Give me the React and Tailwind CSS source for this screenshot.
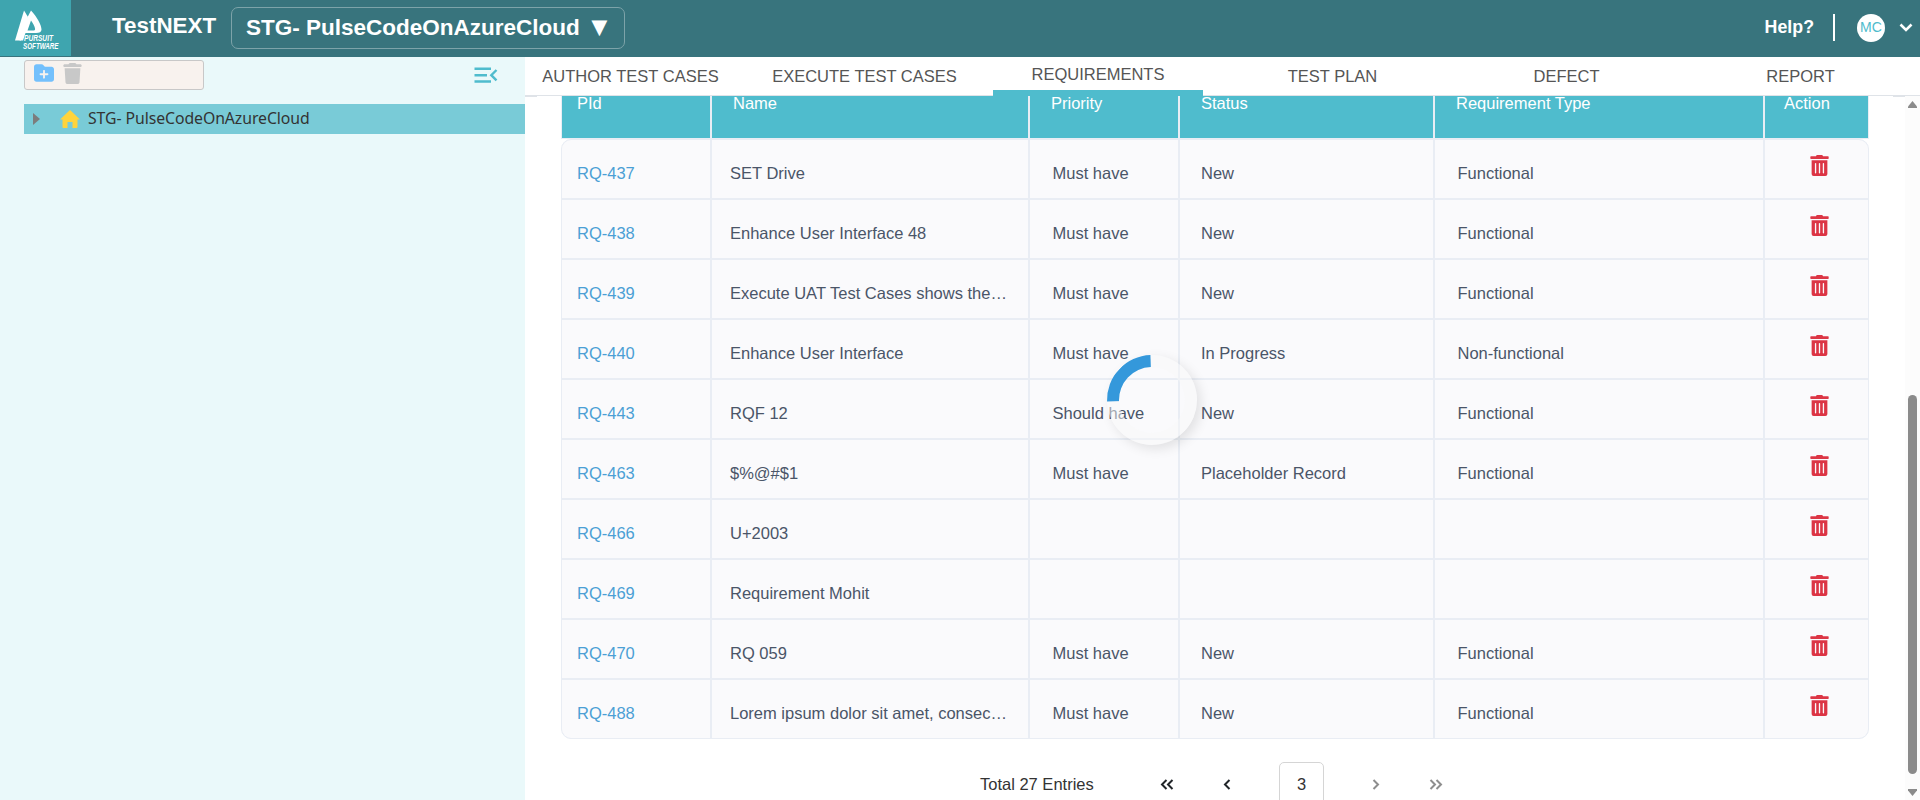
import React from "react";
import { FaTrashAlt } from "react-icons/fa";
import { FaTrash, FaFolderPlus } from "react-icons/fa6";

const rows = [
  ["RQ-437", "SET Drive", "Must have", "New", "Functional"],
  ["RQ-438", "Enhance User Interface 48", "Must have", "New", "Functional"],
  ["RQ-439", "Execute UAT Test Cases shows the…", "Must have", "New", "Functional"],
  ["RQ-440", "Enhance User Interface", "Must have", "In Progress", "Non-functional"],
  ["RQ-443", "RQF 12", "Should have", "New", "Functional"],
  ["RQ-463", "$%@#$1", "Must have", "Placeholder Record", "Functional"],
  ["RQ-466", "U+2003", "", "", ""],
  ["RQ-469", "Requirement Mohit", "", "", ""],
  ["RQ-470", "RQ 059", "Must have", "New", "Functional"],
  ["RQ-488", "Lorem ipsum dolor sit amet, consec…", "Must have", "New", "Functional"],
];

const tabs = ["AUTHOR TEST CASES", "EXECUTE TEST CASES", "REQUIREMENTS", "TEST PLAN", "DEFECT", "REPORT"];

const grid = "grid grid-cols-[148px_316px_148px_253px_328px_103px] gap-x-[2px]";

function Logo() {
  return (
    <svg viewBox="0 0 71 56" className="h-[56px] w-[71px]">
      <path d="M24 10.500 28 17 21 40.500H15z" fill="#fff" />
      <path
        d="M31 10.500C37 17 41.500 25 41.500 29.500C41.500 32 39.500 33 36 33H25.500L23 40.500H19.500L26.500 19z M31 20.500L27.500 30.500H34C36 30.500 35.500 27 31 20.500z"
        fill="#fff"
        fillRule="evenodd"
      />
      <g fill="#fff" fontFamily="Liberation Sans Narrow, Liberation Sans, sans-serif" fontWeight="700" fontStyle="italic" fontSize="8.500">
        <text x="24" y="41.300" textLength="29" lengthAdjust="spacingAndGlyphs">PURSUIT</text>
        <text x="23" y="49" textLength="35.500" lengthAdjust="spacingAndGlyphs">SOFTWARE</text>
      </g>
    </svg>
  );
}

function Header() {
  return (
    <header className="flex h-[57px] shrink-0 items-start bg-[#38747d] text-white">
      <div className="h-[56px] w-[71px] bg-[#3ea5af]"><Logo /></div>
      <div className="mt-[13px] ml-[41px] w-[119px] text-[22.4px] leading-[26px] font-bold">TestNEXT</div>
      <button className="mt-[7px] flex h-[42px] w-[394px] items-center rounded-[7px] border border-[#7da3a9] pl-[14px] text-left text-[22.5px] leading-[26px] font-bold whitespace-pre">
        STG- PulseCodeOnAzureCloud <span className="-mt-[2px] text-[27px]">▼</span>
      </button>
      <div className="ml-auto flex h-[55px] items-center">
        <span className="text-[17.8px] font-bold">Help?</span>
        <span className="ml-[19px] h-[27px] w-[2px] bg-white" />
        <span className="ml-[22px] flex size-[28px] items-center justify-center rounded-full bg-white text-[14px] text-[#4fbccd]">MC</span>
        <svg viewBox="0 0 14 9" className="mr-[7px] ml-[14px] h-[9px] w-[14px]" fill="none" stroke="#fff" strokeWidth="2.600">
          <path d="M1.500 1.500 7 7 12.500 1.500" />
        </svg>
      </div>
    </header>
  );
}

function Sidebar() {
  return (
    <aside className="flex w-[525px] shrink-0 flex-col bg-[#eaf9fa] pt-[3px] pl-[24px]">
      <div className="flex items-start justify-between pr-[27px]">
        <div className="flex h-[30px] w-[180px] items-start rounded-[3px] border border-[#c8c8c8] bg-[#f8f2ee] pl-[9px]">
          <FaFolderPlus className="mt-[2px] size-[20px] text-[#74c0fc]" />
          <FaTrash className="mt-[2px] ml-[8px] size-[21px] text-[#c8c8c8]" />
        </div>
        <svg viewBox="0 0 24 16" className="mt-[7px] h-[16px] w-[24px]" fill="none" stroke="#4fbccd" strokeWidth="2.400">
          <path d="M.5 1.800H17M.5 8.200H13M.5 14.500H17M22.500 3 17.300 8.200 22.500 13.400" />
        </svg>
      </div>
      <div className="mt-[14px] flex h-[30px] items-center bg-[#79cbd7]">
        <svg viewBox="0 0 7 12" className="ml-[9px] h-[12px] w-[7px]"><path d="M0 0 7 6 0 12z" fill="#7c7c7c" /></svg>
        <svg viewBox="0 0 20 18" className="ml-[20px] h-[18px] w-[20px]">
          <path d="M10 0 20 9.500H17.500V17Q17.500 18 16.500 18H12.500V12H7.500V18H3.500Q2.500 18 2.500 17V9.500H0z" fill="#ffd43b" />
        </svg>
        <span className="ml-[8px] font-['Noto_Sans'] text-[15.800px] tracking-[-0.07px] text-[#333]">STG- PulseCodeOnAzureCloud</span>
      </div>
    </aside>
  );
}

function Tabs() {
  return (
    <nav className="flex h-[39px] shrink-0 gap-[24px] text-[16.500px] text-[#555]">
      {tabs.map((t) =>
        t === "REQUIREMENTS" ? (
          <div key={t} className="flex w-[210px] items-center justify-center border-b-[6px] border-[#4fbccd] pt-[2px] leading-[19px] whitespace-nowrap">{t}</div>
        ) : (
          <div key={t} className="flex w-[210px] items-center justify-center pl-px whitespace-nowrap">{t}</div>
        )
      )}
    </nav>
  );
}

function Table() {
  return (
    <div className="w-[1308px]">
      <div className={`${grid} h-[42px] border-x border-[#e9edf4] bg-[#e9edf4] text-[16.500px] leading-[14px] text-white [&>div]:bg-[#4fbccd]`}>
        <div className="pl-[15px]">PId</div>
        <div className="pl-[21px]">Name</div>
        <div className="pl-[21px]">Priority</div>
        <div className="pl-[21px]">Status</div>
        <div className="pl-[21px]">Requirement Type</div>
        <div className="pl-[19px]">Action</div>
      </div>
      <div className="h-px bg-[#e9edf4]" />
      <div className="overflow-hidden rounded-[10px] border border-[#e9edf4] bg-[#e9edf4]">
        <div className="flex flex-col gap-[2px]">
          {rows.map((r) => (
            <div key={r[0]} className={`${grid} h-[58px] text-[16.500px] leading-[19px] text-[#4a5568] [&>div]:bg-[#fafafc] [&>div]:pt-[24px] [&>div]:whitespace-nowrap`}>
              <div className="pl-[15px] text-[#4b9fd5]">{r[0]}</div>
              <div className="pl-[18px]">{r[1]}</div>
              <div className="pl-[22.5px]">{r[2]}</div>
              <div className="pl-[21px]">{r[3]}</div>
              <div className="pl-[22.5px]">{r[4]}</div>
              <div className="flex pl-[44px]"><FaTrashAlt className="mt-[-9px] size-[21px] text-[#dc3545]" /></div>
            </div>
          ))}
        </div>
      </div>
    </div>
  );
}

function Chevrons({ d, w, className }) {
  return (
    <svg viewBox={`0 0 ${w} 11`} width={w} height="11" className={className} fill="none" stroke="currentColor" strokeWidth="2">
      <path d={d} />
    </svg>
  );
}

function Pagination() {
  return (
    <div className="mt-[23px] flex h-[45px] shrink-0 items-center pl-[455px] text-[16.500px] text-[#333]">
      <span className="w-[180px]">Total 27 Entries</span>
      <Chevrons w={14} d="M6.500 1 2 5.500 6.500 10M12.500 1 8 5.500 12.500 10" className="text-[#212529]" />
      <Chevrons w={8} d="M6.500 1 2 5.500 6.500 10" className="ml-[49px] text-[#212529]" />
      <span className="ml-[48px] flex h-[45px] w-[45px] items-center justify-center rounded-[5px] border border-[#d5d5d5]">3</span>
      <Chevrons w={8} d="M1.500 1 6 5.500 1.500 10" className="ml-[48px] text-[#8e8e8e]" />
      <Chevrons w={14} d="M1.500 1 6 5.500 1.500 10M7.500 1 12 5.500 7.500 10" className="ml-[49px] text-[#8e8e8e]" />
    </div>
  );
}

export default function App() {
  return (
    <div className="relative flex h-[800px] w-[1920px] flex-col overflow-hidden bg-white font-['Liberation_Sans',sans-serif]">
      <Header />
      <div className="flex min-h-0 flex-1">
        <Sidebar />
        <main className="flex min-w-0 flex-1 flex-col">
          <Tabs />
          <div className="-mt-px flex h-px shrink-0 bg-[#dfe3e8]"><div className="ml-[468px] w-[210px] bg-[#4fbccd]" /></div>
          <div className="flex min-h-0 flex-1">
            <div className="flex w-[12px] shrink-0 flex-col"><div className="h-px bg-[#dfe3e8]" /></div>
            <div className="flex w-[1356px] shrink-0 flex-col overflow-hidden pl-[24px]">
              <Table />
              <div className="-ml-[36px] shrink-0"><Pagination /></div>
            </div>
            <div className="flex w-[12px] shrink-0 flex-col"><div className="h-px bg-[#dfe3e8]" /></div>
            <div className="flex w-[15px] flex-col items-center bg-[#fcfcfc] pt-[5px] pb-[4px]">
              <svg viewBox="0 0 9 7" className="h-[7px] w-[9px]"><path d="M4.500 0 9 5.500V7H0V5.500z" fill="#8b8b8b" /></svg>
              <div className="mt-[287px] h-[379px] w-[9px] rounded-full bg-[#8b8b8b]" />
              <svg viewBox="0 0 9 7" className="mt-auto h-[7px] w-[9px]"><path d="M4.500 7 9 1.500V0H0V1.500z" fill="#8b8b8b" /></svg>
            </div>
          </div>
        </main>
      </div>
      <div className="absolute top-[355px] left-[1107px] size-[90px] rounded-full shadow-[4px_4px_12px_rgba(0,0,0,0.1)]">
        <div className="size-[90px] -rotate-47 rounded-full border-[12px] border-[#f8f8f8]/50 border-t-[#3498db]" />
      </div>
    </div>
  );
}
